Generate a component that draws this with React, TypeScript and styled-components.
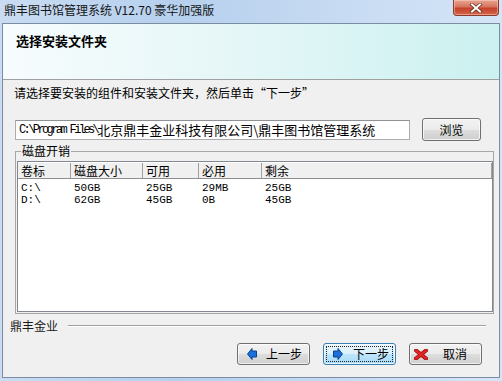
import * as React from 'react'
import styled, { createGlobalStyle } from 'styled-components'

const GlobalStyle = createGlobalStyle`
  html, body {
    margin: 0;
    padding: 0;
    background: #bfd6ee;
  }
  body {
    font-family: "Noto Sans CJK SC", "Noto Sans", sans-serif;
    font-size: 12px;
    color: #000;
  }
`

const CJK = `"Noto Sans CJK SC", "Noto Sans", sans-serif`
const MONO = `"Liberation Mono", "DejaVu Sans Mono", monospace`

const Window = styled.div`
  width: 502px;
  height: 381px;
  box-sizing: border-box;
  display: flex;
  flex-direction: column;
  padding: 0 2px 3px 2px;
  background: linear-gradient(90deg, #c9dcf2 0%, #b6d0ee 35%, #c3d8f1 60%, #d5e5f7 100%);
`

const TitleBar = styled.div`
  height: 23px;
  display: flex;
  align-items: flex-start;
  justify-content: space-between;
  padding-left: 2px;
`

const Title = styled.div`
  font-family: ${CJK};
  font-size: 12px;
  line-height: 20px;
  color: #151515;
  white-space: nowrap;
`

const CloseButton = styled.div`
  width: 46px;
  height: 16px;
  margin-right: 1px;
  box-sizing: border-box;
  border: 1px solid #8a3a2c;
  border-top: none;
  border-radius: 0 0 4px 4px;
  background: linear-gradient(180deg, #e9a593 0%, #d8745d 45%, #c4422a 55%, #d5664a 100%);
  display: flex;
  align-items: center;
  justify-content: center;
  box-shadow: inset 0 0 0 1px rgba(255, 220, 210, 0.45);
`

const Client = styled.div`
  flex: 1;
  display: flex;
  flex-direction: column;
  border: 1px solid #7b8da2;
  background: #f0f0f0;
`

const Header = styled.div`
  height: 45px;
  flex-shrink: 0;
  border-bottom: 1px solid #a0a0a0;
  background: linear-gradient(90deg, #f7fcfd 0%, #e4f6f7 50%, #cbf1f0 100%);
  padding: 10px 13px 0;
`

const HeaderTitle = styled.div`
  font-family: ${CJK};
  font-size: 13px;
  font-weight: bold;
  line-height: 14px;
`

const Intro = styled.div`
  margin: 5px 0 0 11px;
  font-family: ${CJK};
  font-size: 12px;
  line-height: 16px;
  white-space: nowrap;
`

const PathRow = styled.div`
  margin: 17px 0 0 12px;
  display: flex;
  align-items: center;
  gap: 12px;
  height: 23px;
`

const TextBox = styled.div`
  width: 395px;
  height: 20px;
  box-sizing: border-box;
  border: 1px solid #abadb3;
  border-top-color: #8e9196;
  background: #fff;
  padding-left: 3px;
  display: flex;
  align-items: center;
  white-space: nowrap;
  overflow: hidden;
`

const MonoPart = styled.span`
  font-family: ${MONO};
  font-size: 12px;
  letter-spacing: -2.6px;
`

const CjkPart = styled.span`
  font-family: ${CJK};
  font-size: 13px;
`

const Button = styled.div<{ $w?: number; $pad?: number; $primary?: boolean }>`
  position: relative;
  width: ${(p) => p.$w ?? 73}px;
  height: 22px;
  box-sizing: border-box;
  border: 1px solid ${(p) => (p.$primary ? '#3c7fb1' : '#707070')};
  border-radius: 3px;
  background: ${(p) =>
    p.$primary
      ? 'linear-gradient(180deg, #eaf6fd 0%, #d9f0fc 50%, #bee6fd 51%, #a7d9f5 100%)'
      : 'linear-gradient(180deg, #f2f2f2 0%, #ebebeb 50%, #dddddd 51%, #cfcfcf 100%)'};
  box-shadow: inset 0 0 0 1px rgba(255, 255, 255, 0.7);
  display: flex;
  align-items: center;
  padding-left: ${(p) => p.$pad ?? 9}px;
  font-family: ${CJK};
  font-size: 12px;
  line-height: 14px;
  color: #000;
  ${(p) =>
    p.$primary &&
    `&::after {
      content: '';
      position: absolute;
      inset: 2px;
      border: 1px dotted #222;
    }`}
`

const BrowseButton = styled(Button)`
  justify-content: center;
  padding-left: 0;
  height: 23px;
`

const IconSlot = styled.span<{ $w: number }>`
  width: ${(p) => p.$w}px;
  display: flex;
  align-items: center;
  flex-shrink: 0;
`

const Group = styled.fieldset`
  margin: 3px 5px 0 12px;
  padding: 3px 0 1px 1px;
  border: 1px solid #a6a6a6;
  min-width: 0;
`

const GroupLegend = styled.legend`
  margin-left: 4px;
  padding: 0 1px;
  font-family: ${CJK};
  font-size: 12px;
  line-height: 14px;
`

const ListView = styled.div`
  height: 151px;
  box-sizing: border-box;
  border: 1px solid #828790;
  background: #fff;
  display: flex;
  flex-direction: column;
`

const ListHeader = styled.div`
  height: 17px;
  flex-shrink: 0;
  display: grid;
  grid-template-columns: 53px 72px 56px 63px 1fr;
  background: #f0f0f0;
  border-top: 1px solid #fff;
  border-bottom: 1px solid #8e8e8e;
  box-sizing: border-box;
`

const HeaderCell = styled.div`
  padding-left: 3px;
  border-right: 1px solid #a0a0a0;
  font-family: ${CJK};
  font-size: 12px;
  line-height: 15px;
  white-space: nowrap;
`

const ListBody = styled.div`
  padding-top: 3px;
`

const Row = styled.div`
  display: grid;
  grid-template-columns: 53px 72px 56px 63px 1fr;
  height: 12px;
`

const Cell = styled.div`
  padding-left: 3px;
  font-family: ${MONO};
  font-size: 11px;
  line-height: 12px;
  white-space: nowrap;
`

const BrandRow = styled.div`
  margin: 5px 13px 0 7px;
  display: flex;
  align-items: center;
  gap: 10px;
  height: 14px;
`

const Brand = styled.div`
  font-family: ${CJK};
  font-size: 12px;
  line-height: 14px;
  color: #1a1a1a;
`

const Etched = styled.div`
  flex: 1;
  height: 0;
  border-top: 1px solid #a0a0a0;
  border-bottom: 1px solid #fff;
`

const ButtonRow = styled.div`
  margin-top: 10px;
  display: flex;
  justify-content: flex-end;
  gap: 13px;
  padding-right: 17px;
`

const ArrowIcon = ({ dir }: { dir: 'left' | 'right' }) => (
  <svg width="10" height="12" viewBox="0 0 10 12">
    <polygon
      points={dir === 'left' ? '0.5,6 5,0.5 5,3 9.5,3 9.5,9 5,9 5,11.5' : '9.5,6 5,0.5 5,3 0.5,3 0.5,9 5,9 5,11.5'}
      fill="#1c6fd9"
      stroke="#0b3f92"
      strokeWidth="1"
      strokeLinejoin="round"
    />
  </svg>
)

const CrossIcon = () => (
  <svg width="16" height="11" viewBox="0 0 16 11">
    <path d="M3 1.5 L13 9.5 M13 1.5 L3 9.5" stroke="#9c0d0d" strokeWidth="4" strokeLinecap="round" />
    <path d="M3 1.5 L13 9.5 M13 1.5 L3 9.5" stroke="#e42424" strokeWidth="2.4" strokeLinecap="round" />
  </svg>
)

const CloseGlyph = () => (
  <svg width="14" height="10" viewBox="0 0 14 10">
    <path d="M3 1.5 L11 8.5 M11 1.5 L3 8.5" stroke="#5a2a22" strokeWidth="3.4" strokeLinecap="square" />
    <path d="M3 1.5 L11 8.5 M11 1.5 L3 8.5" stroke="#ffffff" strokeWidth="2" strokeLinecap="square" />
  </svg>
)

const disks = [
  { vol: 'C:\\', size: '50GB', free: '25GB', need: '29MB', left: '25GB' },
  { vol: 'D:\\', size: '62GB', free: '45GB', need: '0B', left: '45GB' }
]

export default function App() {
  return (
    <>
      <GlobalStyle />
      <Window>
        <TitleBar>
          <Title>鼎丰图书馆管理系统 V12.70 豪华加强版</Title>
          <CloseButton>
            <CloseGlyph />
          </CloseButton>
        </TitleBar>
        <Client>
          <Header>
            <HeaderTitle>选择安装文件夹</HeaderTitle>
          </Header>
          <Intro>请选择要安装的组件和安装文件夹，然后单击“下一步”</Intro>
          <PathRow>
            <TextBox>
              <MonoPart>C:\Program Files\</MonoPart>
              <CjkPart>北京鼎丰金业科技有限公司\鼎丰图书馆管理系统</CjkPart>
            </TextBox>
            <BrowseButton $w={59}>浏览</BrowseButton>
          </PathRow>
          <Group>
            <GroupLegend>磁盘开销</GroupLegend>
            <ListView>
              <ListHeader>
                <HeaderCell>卷标</HeaderCell>
                <HeaderCell>磁盘大小</HeaderCell>
                <HeaderCell>可用</HeaderCell>
                <HeaderCell>必用</HeaderCell>
                <HeaderCell>剩余</HeaderCell>
              </ListHeader>
              <ListBody>
                {disks.map((d) => (
                  <Row key={d.vol}>
                    <Cell>{d.vol}</Cell>
                    <Cell>{d.size}</Cell>
                    <Cell>{d.free}</Cell>
                    <Cell>{d.need}</Cell>
                    <Cell>{d.left}</Cell>
                  </Row>
                ))}
              </ListBody>
            </ListView>
          </Group>
          <BrandRow>
            <Brand>鼎丰金业</Brand>
            <Etched />
          </BrandRow>
          <ButtonRow>
            <Button>
              <IconSlot $w={19}>
                <ArrowIcon dir="left" />
              </IconSlot>
              上一步
            </Button>
            <Button $primary>
              <IconSlot $w={20}>
                <ArrowIcon dir="right" />
              </IconSlot>
              下一步
            </Button>
            <Button $pad={3}>
              <IconSlot $w={30}>
                <CrossIcon />
              </IconSlot>
              取消
            </Button>
          </ButtonRow>
        </Client>
      </Window>
    </>
  )
}
